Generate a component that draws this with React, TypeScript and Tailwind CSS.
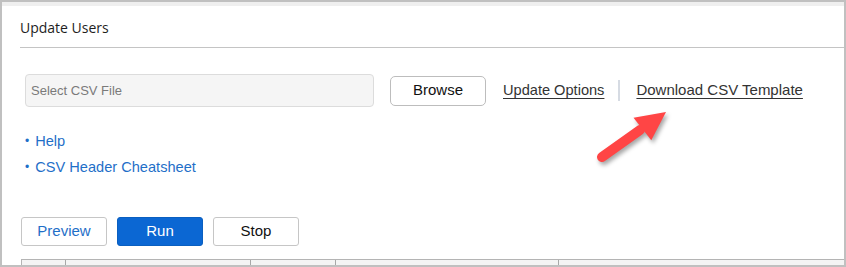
const LINK_FONT = "font-['Liberation_Sans',Arial,sans-serif]";

function Arrow() {
  return (
    <svg
      className="pointer-events-none absolute left-[586px] top-[100px] h-[72px] w-[90px]"
      viewBox="0 0 90 72"
      style={{ filter: "drop-shadow(2px 3px 2px rgba(0,0,0,0.35))" }}
    >
      <line x1="14" y1="55" x2="52" y2="28" stroke="#ff4545" strokeWidth="10" strokeLinecap="round" />
      <polygon points="78,10 45.5,15.7 63.3,38.3" fill="#ff4545" />
    </svg>
  );
}

export default function App() {
  return (
    <div className="relative flex h-[267px] w-[846px] flex-col overflow-hidden border-2 border-[#c0c0c0] bg-white">
      <div className="h-[4px] shrink-0 bg-[#efefef]" />

      <div className="ml-[18px] h-[42px] shrink-0 border-b border-[#c4c4c4] pt-[12px]">
        <h2 className="font-['Open_Sans',sans-serif] text-[14px] leading-[20px] text-[#1e1e1e]">
          Update Users
        </h2>
      </div>

      <div className={`mt-[26px] flex h-[33px] shrink-0 items-center ${LINK_FONT}`}>
        <div className="ml-[23px] flex h-[33px] w-[349px] items-center rounded-[4px] border border-[#dcdcdc] bg-[#f5f5f5] px-[5px] text-[13px] text-[#7a7a7a]">
          Select CSV File
        </div>
        <button
          type="button"
          className="ml-[16px] h-[30px] w-[96px] rounded-[5px] border border-[#bdbdbd] bg-white text-[15px] text-[#111]"
        >
          Browse
        </button>
        <a className="ml-[17px] text-[14.6px] text-[#333] underline underline-offset-[3px]">
          Update Options
        </a>
        <span className="ml-[14px] h-[21px] w-[2px] bg-[#d6dbe3]" />
        <a className="ml-[16px] text-[15px] text-[#333] underline underline-offset-[3px]">
          Download CSV Template
        </a>
      </div>

      <ul className={`mt-[26px] ml-[23px] flex shrink-0 flex-col gap-[9px] text-[14.6px] leading-[17px] text-[#1f6fc8] ${LINK_FONT}`}>
        <li className="flex items-center gap-[6px]">
          <span className="text-[12px]">•</span>
          <a>Help</a>
        </li>
        <li className="flex items-center gap-[6px]">
          <span className="text-[12px]">•</span>
          <a>CSV Header Cheatsheet</a>
        </li>
      </ul>

      <div className={`mt-[41px] ml-[19px] flex shrink-0 gap-[10px] text-[15px] ${LINK_FONT}`}>
        <button
          type="button"
          className="h-[29px] w-[86px] rounded-[3px] border border-[#c6c6c6] bg-white text-[#1f6fc8]"
        >
          Preview
        </button>
        <button
          type="button"
          className="h-[29px] w-[86px] rounded-[3px] border border-[#0a5fc0] bg-[#0b67d3] text-white"
        >
          Run
        </button>
        <button
          type="button"
          className="h-[29px] w-[86px] rounded-[3px] border border-[#c6c6c6] bg-white text-[#111]"
        >
          Stop
        </button>
      </div>

      <div className="mt-[13px] ml-[19px] flex h-[8px] shrink-0 border-t border-l border-[#b4b4b4] bg-[#f4f4f4]">
        <div className="w-[44px] border-r border-[#a8a8a8]" />
        <div className="w-[185px] border-r border-[#a8a8a8]" />
        <div className="w-[85px] border-r border-[#a8a8a8]" />
        <div className="w-[223px] border-r border-[#a8a8a8]" />
        <div className="flex-1" />
      </div>

      <Arrow />
    </div>
  );
}
